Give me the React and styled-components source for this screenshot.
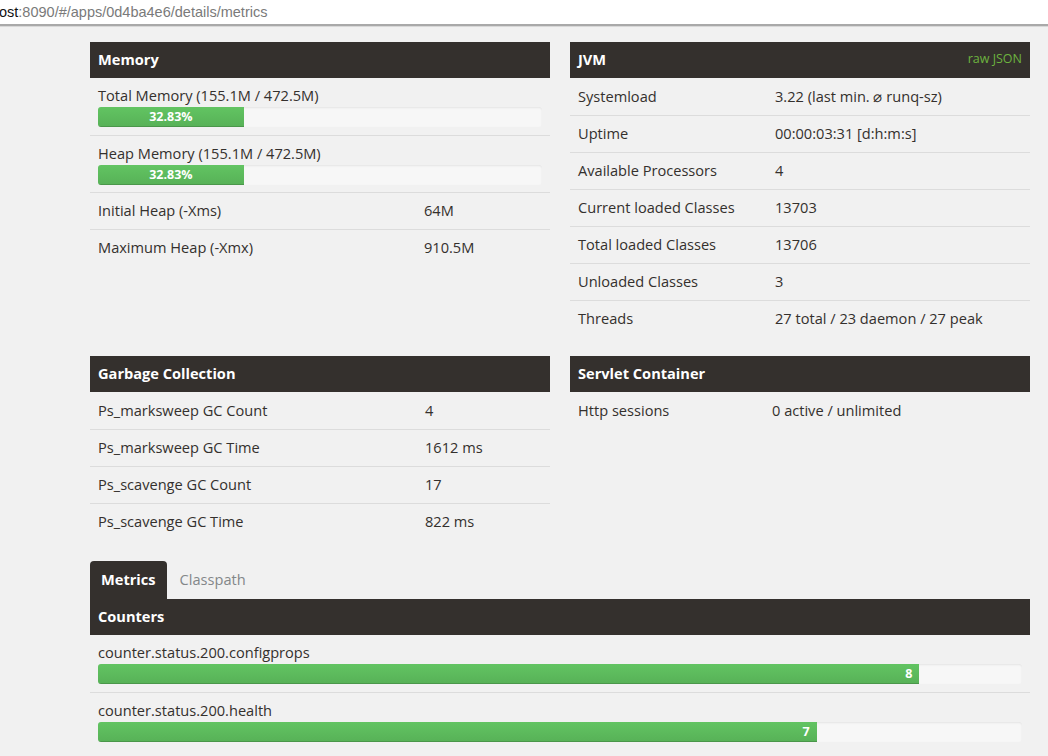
import React from 'react';
import styled, { createGlobalStyle } from 'styled-components';

const GlobalStyle = createGlobalStyle`
  html, body {
    margin: 0;
    padding: 0;
    background: #f1f1f1;
  }
  body {
    font-family: "Open Sans", "Noto Sans", sans-serif;
    font-size: 14.6px;
    color: #34302d;
  }
`;

const memory = {
  bars: [
    { label: 'Total Memory (155.1M / 472.5M)', pct: 32.83 },
    { label: 'Heap Memory (155.1M / 472.5M)', pct: 32.83 }
  ],
  rows: [
    ['Initial Heap (-Xms)', '64M'],
    ['Maximum Heap (-Xmx)', '910.5M']
  ]
};

const jvm = [
  ['Systemload', '3.22 (last min. \u2300 runq-sz)'],
  ['Uptime', '00:00:03:31 [d:h:m:s]'],
  ['Available Processors', '4'],
  ['Current loaded Classes', '13703'],
  ['Total loaded Classes', '13706'],
  ['Unloaded Classes', '3'],
  ['Threads', '27 total / 23 daemon / 27 peak']
];

const gc = [
  ['Ps_marksweep GC Count', '4'],
  ['Ps_marksweep GC Time', '1612 ms'],
  ['Ps_scavenge GC Count', '17'],
  ['Ps_scavenge GC Time', '822 ms']
];

const counters = [
  { name: 'counter.status.200.configprops', value: 8 },
  { name: 'counter.status.200.health', value: 7 }
];
const counterMax = 9;

const App = () => (
  <>
    <GlobalStyle />
    <UrlBar>
      <UrlHost>ost</UrlHost>
      <UrlPath>:8090/#/apps/0d4ba4e6/details/metrics</UrlPath>
    </UrlBar>

    <Page>
      <Grid>
        <Panel>
          <PanelHeader>Memory</PanelHeader>
          {memory.bars.map(b => (
            <BarRow key={b.label}>
              <BarLabel>{b.label}</BarLabel>
              <Progress>
                <Fill style={{ width: `${b.pct}%` }}>{b.pct.toFixed(2)}%</Fill>
              </Progress>
            </BarRow>
          ))}
          {memory.rows.map(([k, v]) => (
            <Row key={k} cols="326px 1fr">
              <span>{k}</span>
              <span>{v}</span>
            </Row>
          ))}
        </Panel>

        <Panel>
          <PanelHeader>
            JVM
            <RawLink>raw JSON</RawLink>
          </PanelHeader>
          {jvm.map(([k, v]) => (
            <Row key={k} cols="197px 1fr">
              <span>{k}</span>
              <span>{v}</span>
            </Row>
          ))}
        </Panel>

        <Panel>
          <PanelHeader>Garbage Collection</PanelHeader>
          {gc.map(([k, v]) => (
            <Row key={k} cols="327px 1fr">
              <span>{k}</span>
              <span>{v}</span>
            </Row>
          ))}
        </Panel>

        <Panel>
          <PanelHeader>Servlet Container</PanelHeader>
          <Row cols="194px 1fr">
            <span>Http sessions</span>
            <span>0 active / unlimited</span>
          </Row>
        </Panel>
      </Grid>

      <Tabs>
        <Tab active>Metrics</Tab>
        <Tab>Classpath</Tab>
      </Tabs>
      <Panel>
        <PanelHeader>Counters</PanelHeader>
        {counters.map(c => (
          <BarRow key={c.name}>
            <BarLabel>{c.name}</BarLabel>
            <Progress>
              <Fill right style={{ width: `${(c.value / counterMax) * 100}%` }}>{c.value}</Fill>
            </Progress>
          </BarRow>
        ))}
      </Panel>
    </Page>
  </>
);

const UrlBar = styled.div`
  height: 24px;
  background: #fff;
  border-bottom: 2px solid #a9a9a9;
  box-shadow: 0 1px 0 #d8d8d8;
  display: flex;
  align-items: center;
  font-family: "Liberation Sans", Arial, sans-serif;
  font-size: 14.5px;
  margin-left: -1px;
  white-space: nowrap;
  overflow: hidden;
`;

const UrlHost = styled.span`
  color: #111;
`;

const UrlPath = styled.span`
  color: #7a7a7a;
`;

const Page = styled.div`
  width: 940px;
  margin-left: 90px;
  padding-top: 16px;
`;

const Grid = styled.div`
  display: grid;
  grid-template-columns: 460px 460px;
  column-gap: 20px;
  row-gap: 19px;
  align-items: start;
`;

const Panel = styled.div``;

const PanelHeader = styled.div`
  height: 36px;
  background: #34302d;
  color: #fff;
  font-weight: 700;
  display: flex;
  align-items: center;
  justify-content: space-between;
  padding: 0 8px 3px;
  box-sizing: border-box;
`;

const RawLink = styled.span`
  color: #6db33f;
  font-weight: 400;
  font-size: 12.5px;
`;

const Row = styled.div`
  display: grid;
  grid-template-columns: ${p => p.cols};
  align-items: center;
  height: 37px;
  padding: 0 8px 2px;
  box-sizing: border-box;
  border-top: 1px solid #dcdcdc;
  ${PanelHeader} + & {
    border-top: none;
  }
`;

const BarRow = styled.div`
  padding: 7px 8px 0;
  height: 57px;
  box-sizing: border-box;
  & + & {
    border-top: 1px solid #dcdcdc;
  }
  & + ${Row} {
    border-top: 1px solid #dcdcdc;
  }
`;

const BarLabel = styled.div`
  line-height: 20px;
`;

const Progress = styled.div`
  margin-top: 2px;
  height: 20px;
  background: #f7f7f7;
  border-radius: 3px;
  box-shadow: inset 0 1px 2px rgba(0, 0, 0, 0.08);
  overflow: hidden;
  display: flex;
`;

const Fill = styled.div`
  height: 100%;
  background: linear-gradient(to bottom, #62c462, #57b157);
  box-shadow: inset 0 -1px 0 rgba(0, 0, 0, 0.15);
  color: #fff;
  font-size: 12.5px;
  font-weight: 700;
  line-height: 20px;
  text-align: ${p => (p.right ? 'right' : 'center')};
  padding-right: ${p => (p.right ? '7px' : '0')};
  box-sizing: border-box;
`;

const Tabs = styled.div`
  display: flex;
  margin-top: 21px;
  height: 38px;
`;

const Tab = styled.div`
  padding: 0 11px 2px;
  display: flex;
  align-items: center;
  border-radius: 4px 4px 0 0;
  background: ${p => (p.active ? '#34302d' : 'transparent')};
  color: ${p => (p.active ? '#fff' : '#838789')};
  font-weight: ${p => (p.active ? 700 : 400)};
  margin-right: 2px;
`;

export default App;
